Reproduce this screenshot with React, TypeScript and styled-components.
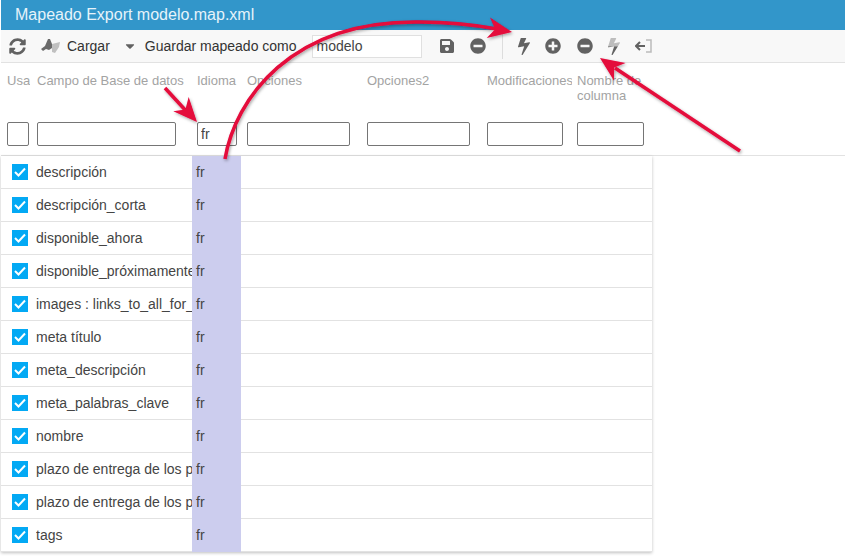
import styled, { createGlobalStyle } from 'styled-components';
import { FaSave, FaMinusCircle, FaPlusCircle, FaSyncAlt, FaCaretDown } from 'react-icons/fa';

const Global = createGlobalStyle`
  html, body {
    margin: 0;
    padding: 0;
    background: #fff;
    font-family: 'Liberation Sans', Arial, sans-serif;
  }
`;

const Page = styled.div`
  position: relative;
  box-sizing: border-box;
  width: 845px;
  height: 557px;
  padding-left: 1px;
  overflow: hidden;
  background: #fff;
`;

const TitleBar = styled.div`
  height: 30px;
  padding-left: 14px;
  background: #3296ca;
  color: #e6f3fa;
  font-size: 16px;
  line-height: 30px;
`;

const Toolbar = styled.div`
  height: 32px;
  display: flex;
  align-items: center;
  background: #f8f8f8;
  border-bottom: 1px solid #e2e2e2;
  color: #333;
  font-size: 14px;
`;

const ToolIcon = styled.span<{ $left: number; $size?: number }>`
  display: inline-flex;
  margin-left: ${(p) => p.$left}px;
  color: #626262;
  font-size: ${(p) => p.$size ?? 16}px;
`;

const ToolText = styled.span<{ $left: number }>`
  margin-left: ${(p) => p.$left}px;
  white-space: nowrap;
`;

const NameInput = styled.input`
  box-sizing: border-box;
  width: 110px;
  height: 23px;
  margin-left: 15px;
  padding: 0 4px;
  border: 1px solid #e0e0e0;
  background: #fff;
  color: #444;
  font: 14px 'Liberation Sans', Arial, sans-serif;
`;

const Divider = styled.span`
  width: 1px;
  height: 26px;
  margin-left: 16px;
  background: #ddd;
`;

const HeaderGrid = styled.div`
  height: 92px;
  display: flex;
  padding-left: 6px;
  border-bottom: 1px solid #e2e2e2;
`;

const HeaderCell = styled.div<{ $width: number; $gap: number }>`
  width: ${(p) => p.$width}px;
  margin-right: ${(p) => p.$gap}px;
  display: flex;
  flex-direction: column;
  justify-content: space-between;
  padding: 10px 0 9px;
  overflow: hidden;
`;

const HeaderLabel = styled.div<{ $wrap: boolean }>`
  height: 30px;
  color: #a3a3a3;
  font-size: 13px;
  line-height: 15px;
  white-space: ${(p) => (p.$wrap ? 'normal' : 'nowrap')};
`;

const FilterInput = styled.input<{ $width: number }>`
  box-sizing: border-box;
  width: ${(p) => p.$width}px;
  height: 24px;
  padding: 0 3px;
  border: 1px solid #757575;
  border-radius: 2px;
  background: #fff;
  color: #444;
  font: 14px 'Liberation Sans', Arial, sans-serif;
`;

const Rows = styled.div`
  width: 651px;
  box-shadow: 0 1px 3px rgba(0, 0, 0, 0.25);
`;

const Row = styled.div`
  height: 32px;
  display: flex;
  align-items: center;
  border-bottom: 1px solid #e2e2e2;
  color: #444;
  font-size: 14px;
`;

const CheckCell = styled.div`
  box-sizing: border-box;
  width: 31px;
  padding-left: 11px;
  display: flex;
`;

const Check = styled.span`
  width: 16px;
  height: 16px;
  display: flex;
  align-items: center;
  justify-content: center;
  background: #03a9f4;
`;

const FieldName = styled.div`
  width: 156px;
  margin-left: 4px;
  overflow: hidden;
  white-space: nowrap;
`;

const LangCell = styled.div`
  width: 49px;
  height: 33px;
  padding-left: 4px;
  box-sizing: border-box;
  line-height: 33px;
  background: #cccdee;
`;

const ArrowLayer = styled.svg`
  position: absolute;
  left: 0;
  top: 0;
  pointer-events: none;
`;

const columns = [
  { label: 'Usa', width: 23, gap: 7, input: 22, value: '' },
  { label: 'Campo de Base de datos', width: 150, gap: 10, input: 139, value: '' },
  { label: 'Idioma', width: 45, gap: 5, input: 40, value: 'fr' },
  { label: 'Opciones', width: 110, gap: 10, input: 103, value: '' },
  { label: 'Opciones2', width: 110, gap: 10, input: 103, value: '' },
  { label: 'Modificaciones', width: 85, gap: 5, input: 76, value: '' },
  { label: 'Nombre de columna', width: 67, gap: 0, input: 67, value: '' },
];

const fields = [
  'descripción',
  'descripción_corta',
  'disponible_ahora',
  'disponible_próximamente',
  'images : links_to_all_for_product',
  'meta título',
  'meta_descripción',
  'meta_palabras_clave',
  'nombre',
  'plazo de entrega de los productos',
  'plazo de entrega de los productos',
  'tags',
];

const BOLT =
  'M1333 566q18 20 7 44l-540 1157q-13 25-42 25-4 0-14-2-17-5-25.5-19t-4.5-30l197-808-406 101q-4 1-12 1-18 0-31-11-18-15-13-39l201-825q4-14 16-23t28-9h328q19 0 32 12.5t13 29.5q0 8-5 18l-171 463 396-98q8-2 12-2 19 0 34 15z';

const BoltIcon = ({ fill }: { fill: string }) => (
  <svg width="12" height="17" viewBox="449 128 895 1664" preserveAspectRatio="none">
    <path d={BOLT} fill={fill} />
  </svg>
);

const Arrowhead = ({ x, y, angle }: { x: number; y: number; angle: number }) => (
  <polygon
    points="0,0 -24,-11 -17,0 -24,10"
    transform={`translate(${x} ${y}) rotate(${angle})`}
    fill="#e4083a"
  />
);

const App: React.FC = () => (
  <Page>
    <Global />
    <TitleBar>Mapeado Export modelo.map.xml</TitleBar>
    <Toolbar>
      <ToolIcon $left={8} $size={17}><FaSyncAlt /></ToolIcon>
      <ToolIcon $left={15}>
        <svg width="20" height="16" viewBox="0 0 20 16">
          <path d="M0 11 L4 8 L7 1 L9 1 L11 6 L11 10 L8 12 L5 11 L2 13 Z" fill="#6a6a6a" />
          <path d="M11 6 L19 4 L18 9 L14 15 L11 14 Z" fill="#c0c0c0" />
        </svg>
      </ToolIcon>
      <ToolText $left={6}>Cargar</ToolText>
      <ToolIcon $left={13} $size={14}><FaCaretDown /></ToolIcon>
      <ToolText $left={8}>Guardar mapeado como</ToolText>
      <NameInput defaultValue="modelo" />
      <ToolIcon $left={17}><FaSave /></ToolIcon>
      <ToolIcon $left={15}><FaMinusCircle /></ToolIcon>
      <Divider />
      <ToolIcon $left={15}><BoltIcon fill="#626262" /></ToolIcon>
      <ToolIcon $left={15}><FaPlusCircle /></ToolIcon>
      <ToolIcon $left={16}><FaMinusCircle /></ToolIcon>
      <ToolIcon $left={15}>
        <svg width="12" height="17" viewBox="449 128 895 1664" preserveAspectRatio="none">
          <defs>
            <linearGradient id="boltFade" x1="0" y1="0" x2="0" y2="1">
              <stop offset="0.45" stopColor="#bdbdbd" />
              <stop offset="0.55" stopColor="#626262" />
            </linearGradient>
          </defs>
          <path d={BOLT} fill="url(#boltFade)" />
        </svg>
      </ToolIcon>
      <ToolIcon $left={15}>
        <svg width="18" height="14" viewBox="0 0 18 14" fill="none" stroke="#626262" strokeWidth="2">
          <path d="M10 7 H1 M5 3 L1 7 L5 11" />
          <path d="M11 1 H16 V13 H11" stroke="#bbb" strokeWidth="1.5" />
        </svg>
      </ToolIcon>
    </Toolbar>
    <HeaderGrid>
      {columns.map((c) => (
        <HeaderCell key={c.label} $width={c.width} $gap={c.gap}>
          <HeaderLabel $wrap={c.label === 'Nombre de columna'}>{c.label}</HeaderLabel>
          <FilterInput $width={c.input} defaultValue={c.value} />
        </HeaderCell>
      ))}
    </HeaderGrid>
    <Rows>
      {fields.map((f, i) => (
        <Row key={i}>
          <CheckCell>
            <Check>
              <svg width="12" height="10" viewBox="0 0 12 10" fill="none" stroke="#fff" strokeWidth="2">
                <path d="M1 5 L4.5 8.5 L11 1.5" />
              </svg>
            </Check>
          </CheckCell>
          <FieldName>{f}</FieldName>
          <LangCell>fr</LangCell>
        </Row>
      ))}
    </Rows>
    <ArrowLayer width="845" height="557" viewBox="0 0 845 557">
      <defs>
        <filter id="arrowShadow" x="-10%" y="-10%" width="120%" height="120%">
          <feDropShadow dx="1" dy="1.5" stdDeviation="1.5" floodColor="#000" floodOpacity="0.35" />
        </filter>
      </defs>
      <g filter="url(#arrowShadow)">
        <path d="M225 159 C235 100 290 20 420 22 C450 22 475 25 497 29" fill="none" stroke="#e4083a" strokeWidth="3.5" />
        <Arrowhead x={512} y={32} angle={9} />
        <path d="M740 151 L615 68" stroke="#e4083a" strokeWidth="3.5" />
        <Arrowhead x={600} y={58} angle={213.6} />
        <path d="M165 88 L188 113" stroke="#e4083a" strokeWidth="3.5" />
        <Arrowhead x={197} y={122} angle={47} />
      </g>
    </ArrowLayer>
  </Page>
);

export default App;
